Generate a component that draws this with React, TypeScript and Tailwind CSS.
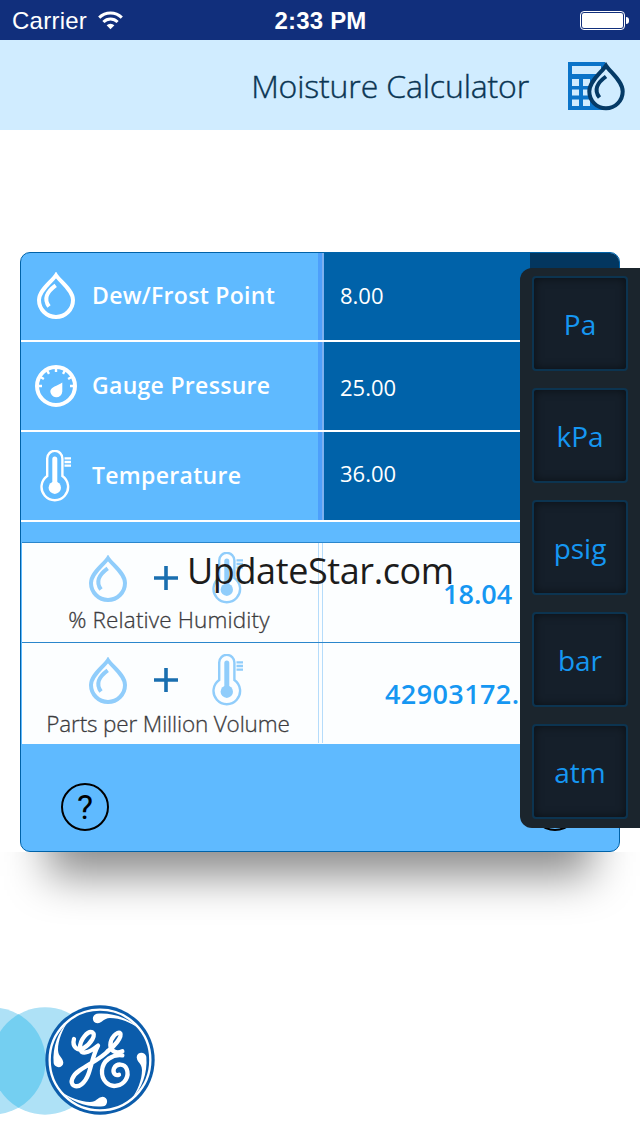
const inputs = [
  { label: "Dew/Frost Point", value: "8.00", icon: <DropIcon />, iconClass: "pb-[3px]", valueClass: "pb-[2px]" },
  { label: "Gauge Pressure", value: "25.00", icon: <GaugeIcon />, iconClass: "", valueClass: "pt-[2px]" },
  { label: "Temperature", value: "36.00", icon: <ThermometerIcon />, iconClass: "", valueClass: "pb-1.5" },
];

const units = ["Pa", "kPa", "psig", "bar", "atm"];

function DropIcon() {
  return (
    <svg width="38" height="47" viewBox="0 0 38 47" fill="none" stroke="currentColor">
      <path d="M19 3.2C15 9.5 2 18 2 28a17 17 0 0 0 34 0C36 18 23 9.5 19 3.2Z" strokeWidth="4" />
      <path d="M18.7 13.3C9.5 20 6.5 27 12 34.5" strokeWidth="4" />
    </svg>
  );
}

function GaugeIcon() {
  const ticks = [-90, -60, -30, 0, 30, 60, 90];
  return (
    <svg width="42" height="42" viewBox="0 0 42 42" fill="none" stroke="currentColor">
      <circle cx="21" cy="21" r="19" strokeWidth="4" />
      {ticks.map((a) => (
        <path key={a} d="M21 3v4" strokeWidth="2.4" transform={`rotate(${a} 21 21)`} />
      ))}
      <path d="M27.3 17.5V26.5a6 6 0 1 1-12-.5C16 22 22 21 27.3 17.5Z" fill="currentColor" stroke="none" />
    </svg>
  );
}

function ThermometerIcon() {
  return (
    <svg width="32" height="52" viewBox="0 0 32 52" fill="none" stroke="currentColor">
      <path d="M7.2 26V8.5a7.6 7.6 0 0 1 15.2 0V26a13.3 13.3 0 1 1-15.2 0Z" strokeWidth="2.4" />
      <circle cx="14.8" cy="37.7" r="6.2" fill="currentColor" stroke="none" />
      <path d="M14.8 9v28" strokeWidth="5" strokeLinecap="round" />
      <path d="M24.5 8.3H31M24.5 12H31M24.5 15.7H31" strokeWidth="2.3" />
    </svg>
  );
}

function PlusIcon() {
  return (
    <svg width="24" height="24" viewBox="0 0 24 24" stroke="#1a6fb0" strokeWidth="3.6">
      <path d="M12 0v24M0 12h24" />
    </svg>
  );
}

function CalculatorIcon() {
  return (
    <svg width="58" height="50" viewBox="0 0 58 50" fill="none">
      <path
        d="M0 0h37v48H0ZM4 4v8h29V4ZM4 17v7h7v-7ZM15 17v7h7v-7ZM4 27.5v6h7v-6ZM15 27.5v6h7v-6ZM4 37.5V44h7v-6.5ZM15 37.5V44h7v-6.5Z"
        fill="#0b74c9"
        fillRule="evenodd"
      />
      <path
        d="M38 3.6C34 10 21.3 19 21.3 29.5a16.7 16.7 0 0 0 33.4 0C54.7 19 42 10 38 3.6Z"
        fill="#d0ecff"
        stroke="#053a66"
        strokeWidth="4"
      />
      <path d="M38 14.5C29 21 25.5 28 31.5 35.5" stroke="#053a66" strokeWidth="4" />
    </svg>
  );
}

function BrandMark() {
  return (
    <svg width="170" height="130" viewBox="0 0 510 390" fill="none">
      <circle cx="-24" cy="195" r="161" fill="#aee1f6" />
      <circle cx="135" cy="195" r="161" fill="#aee1f6" />
      <path d="M55.5 55A161 161 0 0 1 55.5 335A161 161 0 0 1 55.5 55Z" fill="#74cff1" />
      <circle cx="300" cy="192" r="164" fill="#0b5cab" />
      <circle cx="300" cy="192" r="151" stroke="#fff" strokeWidth="7" />
      <g fill="#fff">
        {[0, 90, 180, 270].map((a) => (
          <path
            key={a}
            d="M418 98C385 66 340 49 290 53C274 57 275 81 292 82C309 80 309 67 330 66C360 66 394 80 418 98Z"
            transform={`rotate(${a} 300 192)`}
          />
        ))}
      </g>
      <g stroke="#fff" strokeWidth="13" strokeLinecap="round" strokeLinejoin="round">
        <path d="M222 129C216 151 232 168 250 157C274 142 289 116 277 109C264 103 239 131 240 156C241 178 265 172 294 149C280 174 275 207 265 235C255 262 236 276 222 269C207 260 218 237 239 223C270 202 305 186 323 166" />
        <path d="M323 166C343 151 367 123 361 112C353 103 331 126 331 147C331 166 349 174 367 166" />
        <path d="M367 178C338 174 308 193 306 224C304 254 327 274 350 269C374 265 389 241 380 219C373 201 349 202 342 217C337 231 346 241 357 236" />
      </g>
    </svg>
  );
}

function StatusBar() {
  return (
    <div className="flex h-10 items-center bg-[#112f7c] pr-[11px] pl-3 text-white">
      <div className="flex flex-1 items-center gap-[11px]">
        <span className="pt-0.5 font-['Liberation_Sans',sans-serif] text-[24px] tracking-[0.25px]">Carrier</span>
        <svg width="25" height="19" viewBox="0 0 25 19" fill="none" stroke="#fff" strokeWidth="3">
          <path d="M1.2 6.6a16 16 0 0 1 22.6 0M5.4 11a10 10 0 0 1 14.2 0" />
          <path d="M12.5 18.2 8.6 14.3a5.5 5.5 0 0 1 7.8 0Z" fill="#fff" stroke="none" />
        </svg>
      </div>
      <span className="pt-0.5 font-['Liberation_Sans',sans-serif] text-[24px] font-bold tracking-[0.2px]">2:33 PM</span>
      <div className="flex flex-1 items-center justify-end gap-px">
        <div className="h-[19px] w-[45px] rounded-[4px] border border-white p-px">
          <div className="h-full rounded-[2px] bg-white" />
        </div>
        <div className="h-[7px] w-[3px] rounded-r-full bg-white" />
      </div>
    </div>
  );
}

function FormulaIcons() {
  return (
    <div className="flex w-full items-center pl-[67px] text-[#90cdfb]">
      <DropIcon />
      <span className="ml-[27px]">
        <PlusIcon />
      </span>
      <span className="ml-[34px]">
        <ThermometerIcon />
      </span>
    </div>
  );
}

function HumidityResult() {
  return (
    <div className="flex h-[99px]">
      <div className="flex w-[297px] flex-col items-center border-r border-[#b5dcfb] pt-[9px]">
        <FormulaIcons />
        <span className="mt-px -ml-0.5 text-[22.5px] leading-[30px] font-light tracking-[0.15px] whitespace-nowrap text-[#3c3c40] [-webkit-text-stroke:0.3px]">
          % Relative Humidity
        </span>
      </div>
      <div className="ml-[3px] flex flex-1 items-center border-l border-[#b5dcfb] pt-[3px] pl-[120px]">
        <span className="text-[27px] font-semibold text-[#1597f2]">18.04</span>
      </div>
    </div>
  );
}

function VolumeResult() {
  return (
    <div className="flex h-[101px] border-t border-[#2a86cc]">
      <div className="flex w-[297px] flex-col items-center border-r border-[#b5dcfb] pt-[11px]">
        <FormulaIcons />
        <span className="mt-[3px] -ml-1 text-[22.5px] leading-[30px] font-light tracking-[-0.15px] whitespace-nowrap text-[#3c3c40] [-webkit-text-stroke:0.3px]">
          Parts per Million Volume
        </span>
      </div>
      <div className="ml-[3px] flex flex-1 items-center border-l border-[#b5dcfb] pt-[3px] pl-[62px]">
        <span className="text-[27px] font-semibold tracking-[0.4px] text-[#1597f2]">42903172.</span>
      </div>
    </div>
  );
}

export default function App() {
  return (
    <div className="relative flex h-[1136px] w-[640px] flex-col overflow-hidden bg-white font-['Open_Sans',sans-serif]">
      <StatusBar />
      <header className="flex h-[90px] items-center justify-end bg-[#d0ecff] pt-1 pr-[14px]">
        <h1 className="mr-[39px] pb-[3px] text-[32px] font-light tracking-[-0.15px] text-[#0a3553] [-webkit-text-stroke:0.4px]">
          Moisture Calculator
        </h1>
        <CalculatorIcon />
      </header>

      <main className="mx-5 mt-[122px] flex h-[600px] flex-col overflow-hidden rounded-[10px] border border-[#0062a8] bg-[#5fbaff]">
        {inputs.map((row, i) => (
          <div key={row.label} className={i === 0 ? "flex h-[89px] border-b-2 border-white" : "flex h-[90px] border-b-2 border-white"}>
            <div className="flex w-[297px] items-center text-white">
              <span className={`flex w-[69px] justify-center ${row.iconClass}`}>{row.icon}</span>
              <span className="ml-0.5 pb-0.5 text-[23px] font-semibold tracking-[0.3px] whitespace-nowrap">{row.label}</span>
            </div>
            <div className="w-1 bg-[#4d9ffb]" />
            <div className="w-0.5 bg-[#7cb0ef]" />
            <div className="flex flex-1 items-center bg-[#0062a9] pl-4 text-[22px] text-white">
              <span className={row.valueClass}>{row.value}</span>
            </div>
            <div className="w-[89px] bg-[#03365f]" />
          </div>
        ))}

        <div className="mt-5 ml-px h-[202px] border-t border-[#2a86cc] bg-[#fcfeff]">
          <HumidityResult />
          <VolumeResult />
        </div>

        <div className="flex justify-between px-10 pt-[39px]">
          <button className="flex size-12 items-center justify-center rounded-full border-2 border-black font-['Roboto',sans-serif] text-[34px]">
            ?
          </button>
          <button className="size-12 rounded-full border-2 border-black" />
        </div>
      </main>

      {/* drop shadow only shows under the card, never beside it */}
      <div className="h-[90px] overflow-hidden px-[48px]">
        <div className="-mt-[60px] h-[84px] bg-black/45 blur-[22px]" />
      </div>

      <footer className="mt-[54px]">
        <BrandMark />
      </footer>

      <aside className="absolute top-[268px] right-0 flex h-[560px] w-[120px] flex-col gap-[17px] rounded-l-xl bg-[#1b252d] px-3 pt-2">
        {units.map((unit) => (
          <button
            key={unit}
            className="h-[95px] rounded-[4px] border-2 border-[#0c3450] bg-[#151f2a] text-[28px] text-[#1597f2] shadow-[inset_0_0_10px_rgba(0,0,0,0.5)]"
          >
            {unit}
          </button>
        ))}
      </aside>

      <div className="absolute top-[547px] left-[187px] text-[36px] leading-[48px] tracking-[-0.4px] text-[#1c1c1c]">UpdateStar.com</div>
    </div>
  );
}
